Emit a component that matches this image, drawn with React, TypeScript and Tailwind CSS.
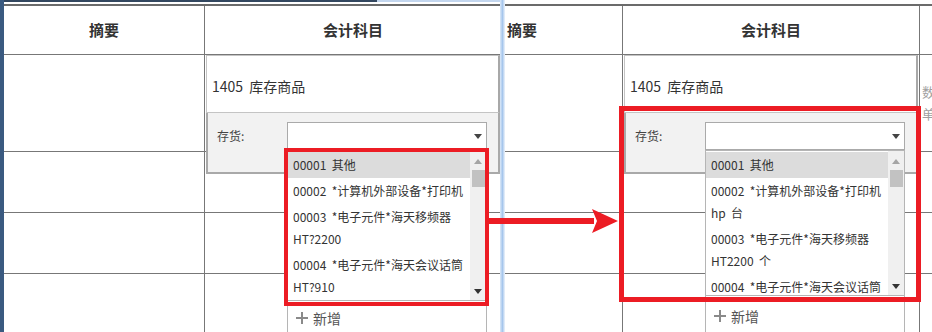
import React from "react";

type Variant = "before" | "after";

const options: Record<Variant, string[][]> = {
  before: [
    ["00001 其他"],
    ["00002 *计算机外部设备*打印机"],
    ["00003 *电子元件*海天移频器", "HT?2200"],
    ["00004 *电子元件*海天会议话筒", "HT?910"],
  ],
  after: [
    ["00001 其他"],
    ["00002 *计算机外部设备*打印机", "hp 台"],
    ["00003 *电子元件*海天移频器", "HT2200 个"],
    ["00004 *电子元件*海天会议话筒"],
  ],
};

const Caret = ({ className }: { className: string }) => (
  <svg width="8" height="5" viewBox="0 0 8 5" className={className}>
    <path d="M0 0h8L4 5z" fill="currentColor" />
  </svg>
);

const Dropdown = ({ variant }: { variant: Variant }) => {
  const listH = variant === "before" ? "h-[151px]" : "h-[146px]";
  return (
    <div className="absolute top-0 left-[1px] w-[294px]">
      <div className="h-[58px] bg-white border border-[#c4c4c4] border-r-2 border-r-[#a8a8a8] flex items-center pl-[5px] pt-[4px] text-[14px] text-[#333]">
        1405&nbsp;&nbsp;库存商品
      </div>
      <div className="h-[61px] bg-[#f2f2f2] border-x-2 border-b-2 border-[#a9a9a9] flex items-start pt-[9px]">
        <div className="w-[79px] pl-[9px] pt-[4px] text-[12px] leading-[20px] text-[#444]">存货:</div>
        <div className="relative w-[200px]">
          <div className="h-[28px] bg-white border border-[#aaa] flex items-center justify-end pr-[4px]">
            <Caret className="text-[#444]" />
          </div>
          <div className="absolute left-0 top-full w-[200px] z-10">
            <div className={`relative ${listH} overflow-hidden bg-white border border-[#b5b5b5] pt-[1px] pr-[16px]`}>
              {options[variant].map((lines, i) => (
                <div
                  key={i}
                  className={`py-[2px] pl-[5px] text-[12px] leading-[22px] text-[#333] ${i === 0 ? "bg-[#dcdcdc]" : ""}`}
                >
                  {lines.map((l) => (
                    <div key={l} className="whitespace-pre overflow-hidden">
                      {l.replace(" ", "  ")}
                    </div>
                  ))}
                </div>
              ))}
              <div className="absolute top-0 right-0 bottom-0 w-[16px] bg-[#f0f0f0] flex flex-col items-center">
                <Caret className="text-[#a5a5a5] rotate-180 mt-[8px]" />
                <div className="w-[13px] h-[17px] bg-[#c2c2c2] mt-[6px]" />
                <div className="flex-1" />
                <Caret className="text-[#333] mb-[6px]" />
              </div>
            </div>
            <div
              className={`h-[40px] bg-white border-x border-[#b5b5b5] flex items-start gap-[5px] pl-[8px] text-[14px] text-[#555] ${
                variant === "before" ? "pt-[7px]" : "pt-[10px]"
              }`}
            >
              <svg width="12" height="12" viewBox="0 0 12 12" className="mt-[4px]">
                <path d="M6 0v12M0 6h12" stroke="#8a8a8a" strokeWidth="2" />
              </svg>
              <span className="leading-[20px]">新增</span>
            </div>
          </div>
        </div>
      </div>
    </div>
  );
};

const VoucherTable = ({ variant }: { variant: Variant }) => (
  <div className="w-[800px] border-t-2 border-[#6b6b6b]">
    <div className="h-[49px] flex border-b border-[#777]">
      <div className="w-[201px] border-r border-[#777] flex items-center justify-center font-bold text-[15px] text-[#333]">
        摘要
      </div>
      <div className="w-[297px] border-r border-[#777] flex items-center justify-center font-bold text-[15px] text-[#333]">
        会计科目
      </div>
      <div className="flex-1" />
    </div>
    <div className="h-[97px] flex border-b border-[#777]">
      <div className="w-[201px] border-r border-[#777]" />
      <div className="w-[297px] border-r border-[#777] relative z-10">
        <Dropdown variant={variant} />
      </div>
      {variant === "after" ? (
        <div className="flex-1 pl-[2px] pt-[26px] text-[13px] leading-[22px] text-[#a0a0a0]">
          <div>数量</div>
          <div>单价</div>
        </div>
      ) : (
        <div className="flex-1" />
      )}
    </div>
    {[0, 1, 2].map((r) => (
      <div key={r} className="h-[61px] flex border-b border-[#777]">
        <div className="w-[201px] border-r border-[#777]" />
        <div className="w-[297px] border-r border-[#777]" />
        <div className="flex-1" />
      </div>
    ))}
  </div>
);

export default function App() {
  return (
    <div
      className="relative w-[932px] h-[332px] overflow-hidden bg-white flex"
      style={{ fontFamily: '"Noto Sans CJK SC", "Noto Sans", sans-serif' }}
    >
      <div className="w-[500px] h-full flex overflow-hidden">
        <div className="w-[4px] h-full bg-[#3a5a80]" />
        <div className="flex-1 overflow-hidden">
          <div className="h-[2px] flex">
            <div className="w-[373px] bg-[#33475f]" />
            <div className="flex-1 bg-[#c3d6ee]" />
          </div>
          <div className="h-[2px]" />
          <VoucherTable variant="before" />
        </div>
      </div>
      <div className="w-[5px] h-full bg-gradient-to-r from-[#dce9f8] via-[#a6c6ec] to-[#eef4fb]" />
      <div className="flex-1 h-full overflow-hidden pt-[4px]">
        <div className="ml-[-83px]">
          <VoucherTable variant="after" />
        </div>
      </div>

      <div className="absolute left-[284px] top-[148px] w-[205px] h-[158px] border-4 border-[#ec1c24] z-20" />
      <div className="absolute left-[619px] top-[106px] w-[302px] h-[196px] border-[5px] border-[#ec1c24] z-20" />
      <svg className="absolute left-[488px] top-[206px] z-20" width="132" height="30" viewBox="0 0 132 30">
        <path d="M0 12h106v6H0z" fill="#ec1c24" />
        <path d="M104 3L130 15L104 27L109 15z" fill="#ec1c24" />
      </svg>
    </div>
  );
}
